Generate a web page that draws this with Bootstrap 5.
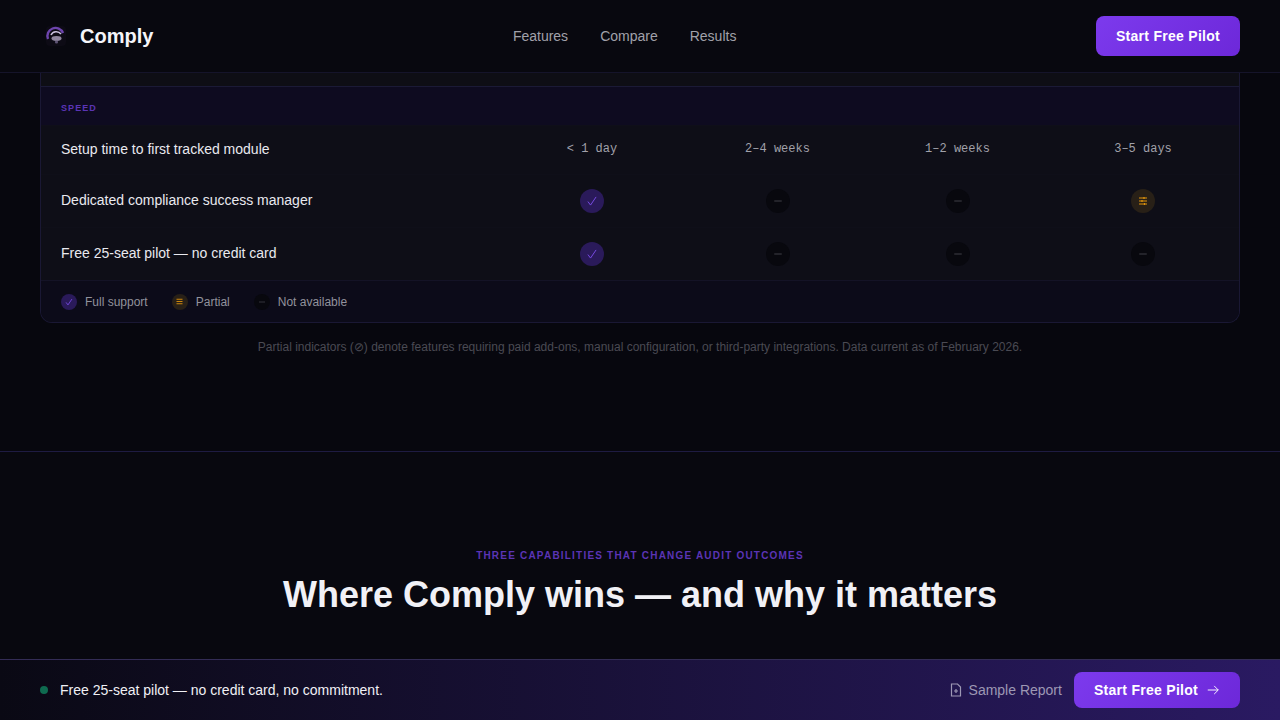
<!doctype html>
<html lang="en">
<head>
<meta charset="utf-8">
<title>Comply</title>
<link href="https://cdn.jsdelivr.net/npm/bootstrap@5.3.0/dist/css/bootstrap.min.css" rel="stylesheet">
<style>
html,body{height:100%;}
body{background:#07070e;font-family:"Liberation Sans",Arial,sans-serif;color:#f4f4f8;overflow:hidden;}
.shell{height:720px;}
.topbar{height:73px;background:#08080f;border-bottom:1px solid #15142a;padding:0 40px;flex:none;}
.brandname{font-size:20px;font-weight:700;color:#f5f5fa;}
.brandlogo{width:32px;height:32px;flex:none;}
.toplinks{gap:32px;font-size:14px;}
.toplinks a{color:#a1a1aa;text-decoration:none;}
.cta{background:linear-gradient(135deg,#7c3aed,#6d28d9);color:#fff;border:0;border-radius:8px;font-weight:700;font-size:14px;letter-spacing:.28px;padding:0 20px;height:40px;}
.cta:hover{background:#6d28d9;color:#fff;}
.viewport{overflow:hidden;min-height:0;}
.tablewrap{margin:0 40px;border:1px solid #1a1834;border-top:0;border-radius:0 0 12px 12px;background:#0e0e17;overflow:hidden;}
.stub{height:14px;background:#0e0e15;border-bottom:1px solid #1b1a36;}
.cmp{table-layout:fixed;width:100%;border-collapse:collapse;}
.cmp td{padding:0;vertical-align:middle;}
.cmp .c0{width:456px;}.cmp .c1{width:190px;}.cmp .c2{width:181px;}.cmp .c3{width:179px;}
.sect td{height:38px;background:#0e0b20;padding:5px 0 0 20px;font-size:9px;font-weight:700;letter-spacing:1.08px;color:#5b34b5;}
.datarow td{border-top:1px solid #0f0f19;text-align:center;}
.datarow td:first-child{text-align:left;padding-left:20px;font-size:14px;color:#e9e9ef;}
.h49 td{height:49px;}.h53 td{height:53px;}
.cmp td.valtxt{font-family:"Liberation Mono",monospace;font-size:12px;color:#a1a1aa;padding-bottom:2px;}
.dot{width:24px;height:24px;border-radius:50%;display:inline-flex;align-items:center;justify-content:center;vertical-align:middle;}
.dotfull{background:#2a1a5a;color:#7c4dea;}
.dotpart{background:#282017;color:#e0930c;}
.dotnone{background:#08080e;color:#3f3f46;}
.dotsm{width:16px;height:16px;}
.legendbar{height:42px;background:#0c0b19;border-top:1px solid #141326;padding:0 20px;gap:24px;font-size:12px;color:#92929c;}
.legendbar>div{gap:8px;}
.footnote{font-size:12px;color:#4a4a53;text-align:center;margin-top:15px;}
.sectiontwo{margin-top:79px;border-top:1px solid #1e1b42;background:#08080f;padding-top:96px;flex:1;}
.eyebrow{font-size:10px;font-weight:700;letter-spacing:1.2px;color:#5b34b5;text-align:center;margin-bottom:10px;line-height:15px;}
.bigtitle{font-size:36px;font-weight:700;color:#f1f1f6;text-align:center;margin:0;line-height:1.2;}
.bottombar{height:61px;flex:none;padding:0 40px;border-top:1px solid #332c55;background:linear-gradient(90deg,#0a0914,#2a1a62);}
.livedot{width:8px;height:8px;border-radius:50%;background:#0f6b50;}
.offer{font-size:14px;color:#f0f0f5;}
.samplelink{font-size:14px;color:#9d98b4;text-decoration:none;gap:7px;}
.ctalow{height:36px;gap:8px;}
.barcta{gap:12px;}
</style>
</head>
<body>
<div class="shell d-flex flex-column">
  <header class="topbar d-flex align-items-center justify-content-between">
    <div class="d-flex align-items-center gap-2">
      <svg class="brandlogo" viewBox="0 0 32 32"><rect x="6" y="6" width="20" height="20" rx="4" fill="#0d0b15"/><path d="M8 19a8 8 0 0 1 15-6" fill="none" stroke="#6d45ad" stroke-width="2.400"/><path d="M11 15a6 6 0 0 1 10-1" fill="none" stroke="#c9c0dc" stroke-width="1.600"/><ellipse cx="16.500" cy="18.500" rx="5" ry="2.400" fill="#8f869f"/><circle cx="16.500" cy="22" r="1.600" fill="#5e5474"/></svg>
      <span class="brandname">Comply</span>
    </div>
    <nav class="toplinks d-flex">
      <a href="#">Features</a><a href="#">Compare</a><a href="#">Results</a>
    </nav>
    <button class="btn cta">Start Free Pilot</button>
  </header>

  <main class="viewport flex-grow-1 d-flex flex-column">
    <div class="tablewrap">
      <div class="stub"></div>
      <table class="cmp">
        <colgroup><col class="c0"><col class="c1"><col class="c2"><col class="c3"><col></colgroup>
        <tr class="sect"><td colspan="5">SPEED</td></tr>
        <tr class="datarow h49"><td>Setup time to first tracked module</td><td class="valtxt">&lt; 1 day</td><td class="valtxt">2–4 weeks</td><td class="valtxt">1–2 weeks</td><td class="valtxt">3–5 days</td></tr>
        <tr class="datarow h53"><td>Dedicated compliance success manager</td>
          <td><span class="dot dotfull"><svg width="14" height="14" viewBox="0 0 24 24" fill="none" stroke="currentColor" stroke-width="1.600"><path d="M19 5 9.500 19 5 13"/></svg></span></td>
          <td><span class="dot dotnone"><svg width="10" height="10" viewBox="0 0 24 24" fill="none" stroke="currentColor" stroke-width="2.400"><path d="M3 12h18"/></svg></span></td>
          <td><span class="dot dotnone"><svg width="10" height="10" viewBox="0 0 24 24" fill="none" stroke="currentColor" stroke-width="2.400"><path d="M3 12h18"/></svg></span></td>
          <td><span class="dot dotpart"><svg width="12" height="12" viewBox="0 0 24 24" fill="none" stroke="currentColor" stroke-width="2.400"><path d="M4 6h16M4 12h16M4 18h16"/><path d="M14 4v4M10 10v4M15 16v4"/></svg></span></td>
        </tr>
        <tr class="datarow h53"><td>Free 25-seat pilot — no credit card</td>
          <td><span class="dot dotfull"><svg width="14" height="14" viewBox="0 0 24 24" fill="none" stroke="currentColor" stroke-width="1.600"><path d="M19 5 9.500 19 5 13"/></svg></span></td>
          <td><span class="dot dotnone"><svg width="10" height="10" viewBox="0 0 24 24" fill="none" stroke="currentColor" stroke-width="2.400"><path d="M3 12h18"/></svg></span></td>
          <td><span class="dot dotnone"><svg width="10" height="10" viewBox="0 0 24 24" fill="none" stroke="currentColor" stroke-width="2.400"><path d="M3 12h18"/></svg></span></td>
          <td><span class="dot dotnone"><svg width="10" height="10" viewBox="0 0 24 24" fill="none" stroke="currentColor" stroke-width="2.400"><path d="M3 12h18"/></svg></span></td>
        </tr>
      </table>
      <div class="legendbar d-flex align-items-center">
        <div class="d-flex align-items-center"><span class="dot dotfull dotsm"><svg width="10" height="10" viewBox="0 0 24 24" fill="none" stroke="currentColor" stroke-width="2"><path d="M19 5 9.500 19 5 13"/></svg></span>Full support</div>
        <div class="d-flex align-items-center"><span class="dot dotpart dotsm"><svg width="9" height="9" viewBox="0 0 24 24" fill="none" stroke="currentColor" stroke-width="2.400"><path d="M4 6h16M4 12h16M4 18h16"/></svg></span>Partial</div>
        <div class="d-flex align-items-center"><span class="dot dotnone dotsm"><svg width="8" height="8" viewBox="0 0 24 24" fill="none" stroke="currentColor" stroke-width="2.400"><path d="M3 12h18"/></svg></span>Not available</div>
      </div>
    </div>
    <p class="footnote">Partial indicators (⊘) denote features requiring paid add-ons, manual configuration, or third-party integrations. Data current as of February 2026.</p>
    <section class="sectiontwo">
      <div class="eyebrow">THREE CAPABILITIES THAT CHANGE AUDIT OUTCOMES</div>
      <h2 class="bigtitle">Where Comply wins — and why it matters</h2>
    </section>
  </main>

  <footer class="bottombar d-flex align-items-center justify-content-between">
    <div class="d-flex align-items-center gap-2"><span class="livedot me-1"></span><span class="offer">Free 25-seat pilot — no credit card, no commitment.</span></div>
    <div class="d-flex align-items-center barcta"><a href="#" class="samplelink d-flex align-items-center"><svg width="12" height="14" viewBox="0 0 12 14" fill="none" stroke="currentColor" stroke-width="1.200"><path d="M1.500 1h6l3 3v9h-9z"/><path d="M6 6v4M4 8h4"/></svg>Sample Report</a>
    <button class="btn cta ctalow d-flex align-items-center">Start Free Pilot<svg width="14" height="14" viewBox="0 0 24 24" fill="none" stroke="currentColor" stroke-width="1.600"><path d="M3 12h18M14 5l7 7-7 7"/></svg></button></div>
  </footer>
</div>
</body>
</html>
